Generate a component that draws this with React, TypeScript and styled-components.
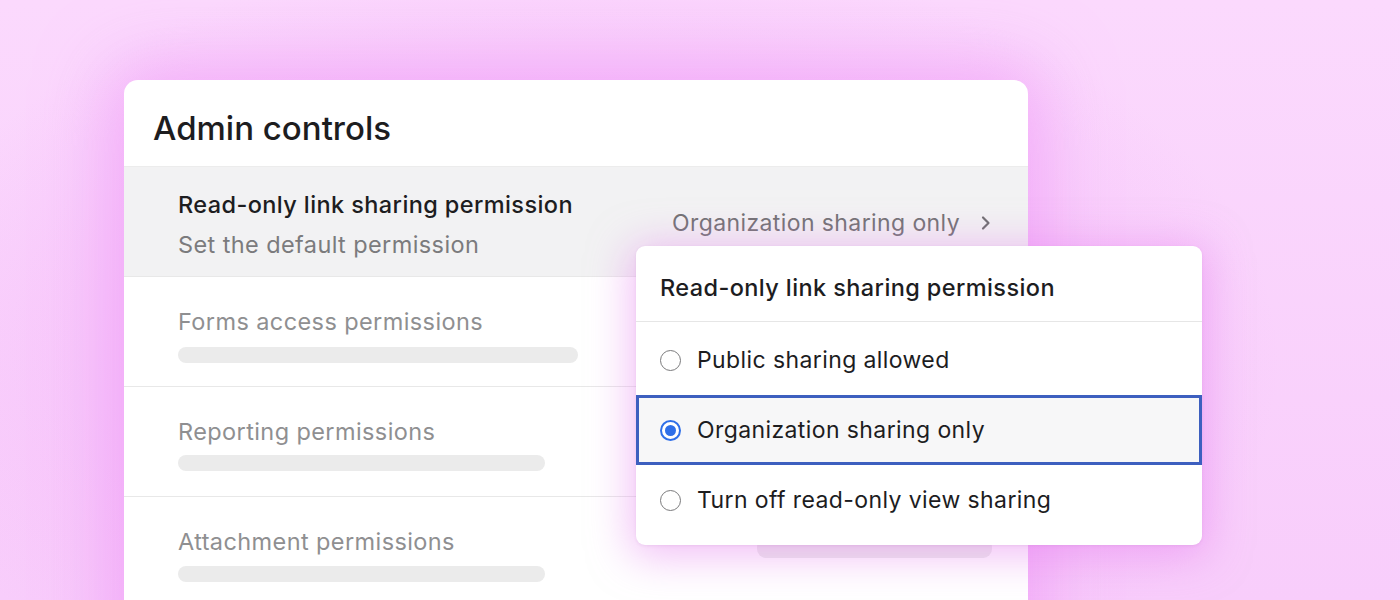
import React from "react";
import styled, { createGlobalStyle } from "styled-components";

const Global = createGlobalStyle`
  html, body { margin: 0; padding: 0; }
  body { font-family: Inter, "Noto Sans", "Liberation Sans", sans-serif; -webkit-font-smoothing: antialiased; }
`;

const Stage = styled.div`
  width: 1400px;
  height: 600px;
  overflow: hidden;
  box-sizing: border-box;
  padding: 80px 0 0 124px;
  background:
    radial-gradient(ellipse 700px 420px at 580px 360px, rgba(238, 150, 246, 0.55), rgba(238, 150, 246, 0) 100%),
    linear-gradient(180deg, #fbd9fd 0%, #f8cdfb 100%);
`;

const Card = styled.div`
  position: relative;
  width: 904px;
  height: 640px;
  background: #ffffff;
  border-radius: 14px;
  box-shadow: 0 0 70px 14px rgba(236, 140, 245, 0.55);
  display: flex;
  flex-direction: column;
`;

const Header = styled.div`
  height: 87px;
  box-sizing: border-box;
  padding: 29px 0 0 29px;
  border-bottom: 1px solid #ececec;
`;

const Title = styled.h1`
  margin: 0;
  font-size: 33px;
  line-height: 38px;
  font-weight: 500;
  color: #1d1d1f;
  letter-spacing: 0;
`;

const Row = styled.div<{ $active?: boolean }>`
  height: 110px;
  flex: none;
  box-sizing: border-box;
  display: flex;
  align-items: ${(p) => (p.$active ? "center" : "flex-start")};
  justify-content: space-between;
  padding: 0 36px 0 54px;
  background: ${(p) => (p.$active ? "#f2f2f3" : "#ffffff")};
  border-bottom: 1px solid #e8e8e8;
`;

const TextCol = styled.div<{ $gap: number; $shift?: number }>`
  display: flex;
  flex-direction: column;
  gap: ${(p) => p.$gap}px;
  margin-top: ${(p) => p.$shift ?? 0}px;
`;

const RowTitle = styled.div<{ $muted?: boolean }>`
  font-size: 23.5px;
  line-height: 30px;
  letter-spacing: 0.4px;
  font-weight: ${(p) => (p.$muted ? 400 : 500)};
  color: ${(p) => (p.$muted ? "#8f8f91" : "#1d1d1f")};
`;

const RowSub = styled.div`
  font-size: 23.5px;
  line-height: 30px;
  letter-spacing: 0.4px;
  color: #7b7b7d;
`;

const Value = styled.div`
  display: flex;
  align-items: center;
  gap: 20px;
  font-size: 23px;
  line-height: 30px;
  letter-spacing: 0.4px;
  color: #727274;
  margin-top: 2px;
`;

const Bar = styled.div<{ $w: number; $h?: number }>`
  width: ${(p) => p.$w}px;
  height: ${(p) => p.$h ?? 16}px;
  border-radius: 9px;
  background: #ebebeb;
`;

const PlaceholderBody = styled.div`
  padding-top: 30px;
`;

const RightBar = styled.div`
  margin-top: 41px;
`;

const Popup = styled.div`
  position: absolute;
  left: 512px;
  top: 166px;
  width: 566px;
  height: 299px;
  box-sizing: border-box;
  background: #ffffff;
  border-radius: 9px;
  box-shadow: 0 6px 40px 6px rgba(230, 130, 240, 0.5), 0 1px 3px rgba(120, 60, 130, 0.12);
  display: flex;
  flex-direction: column;
`;

const PopupHeader = styled.div`
  height: 76px;
  box-sizing: border-box;
  display: flex;
  align-items: center;
  padding: 7px 24px 0;
  border-bottom: 1px solid #e6e6e6;
  font-size: 23.5px;
  letter-spacing: 0.4px;
  font-weight: 500;
  color: #1d1d1f;
`;

const OptionList = styled.div`
  padding: 3px 0 0;
  display: flex;
  flex-direction: column;
`;

const Option = styled.div<{ $selected?: boolean }>`
  height: 70px;
  box-sizing: border-box;
  display: flex;
  align-items: center;
  gap: 16px;
  padding: 0 21px;
  border: 3px solid ${(p) => (p.$selected ? "#3d5fbf" : "transparent")};
  background: ${(p) => (p.$selected ? "#f7f7f8" : "transparent")};
  font-size: 23px;
  letter-spacing: 0.4px;
  color: #1d1d1f;
`;

const Radio = styled.span<{ $on?: boolean }>`
  width: 21px;
  height: 21px;
  box-sizing: border-box;
  border-radius: 50%;
  flex: none;
  border: ${(p) => (p.$on ? "2px solid #2f6fe8" : "1.5px solid #7a7a7c")};
  display: flex;
  align-items: center;
  justify-content: center;
  background: #fff;
  &::after {
    content: "";
    width: 11px;
    height: 11px;
    border-radius: 50%;
    background: ${(p) => (p.$on ? "#2f6fe8" : "transparent")};
  }
`;

const Chevron = () => (
  <svg width="12" height="16" viewBox="0 0 12 16" fill="none">
    <path d="M3 2.5 L8.5 8 L3 13.5" stroke="#6e6e70" strokeWidth="2.2" strokeLinecap="round" strokeLinejoin="round" />
  </svg>
);

const placeholders = [
  { title: "Forms access permissions", w: 400, gap: 10 },
  { title: "Reporting permissions", w: 367, gap: 8 },
  { title: "Attachment permissions", w: 367, gap: 9 },
];

const options = [
  { label: "Public sharing allowed", on: false },
  { label: "Organization sharing only", on: true },
  { label: "Turn off read-only view sharing", on: false },
];

export default function App() {
  return (
    <Stage>
      <Global />
      <Card>
        <Header>
          <Title>Admin controls</Title>
        </Header>
        <Row $active>
          <TextCol $gap={10} $shift={6}>
            <RowTitle>Read-only link sharing permission</RowTitle>
            <RowSub>Set the default permission</RowSub>
          </TextCol>
          <Value>
            Organization sharing only
            <Chevron />
          </Value>
        </Row>
        {placeholders.map((p) => (
          <Row key={p.title}>
            <PlaceholderBody>
              <TextCol $gap={p.gap}>
                <RowTitle $muted>{p.title}</RowTitle>
                <Bar $w={p.w} />
              </TextCol>
            </PlaceholderBody>
            <RightBar>
              <Bar $w={235} $h={20} />
            </RightBar>
          </Row>
        ))}
        <Popup>
          <PopupHeader>Read-only link sharing permission</PopupHeader>
          <OptionList>
            {options.map((o) => (
              <Option key={o.label} $selected={o.on}>
                <Radio $on={o.on} />
                {o.label}
              </Option>
            ))}
          </OptionList>
        </Popup>
      </Card>
    </Stage>
  );
}
